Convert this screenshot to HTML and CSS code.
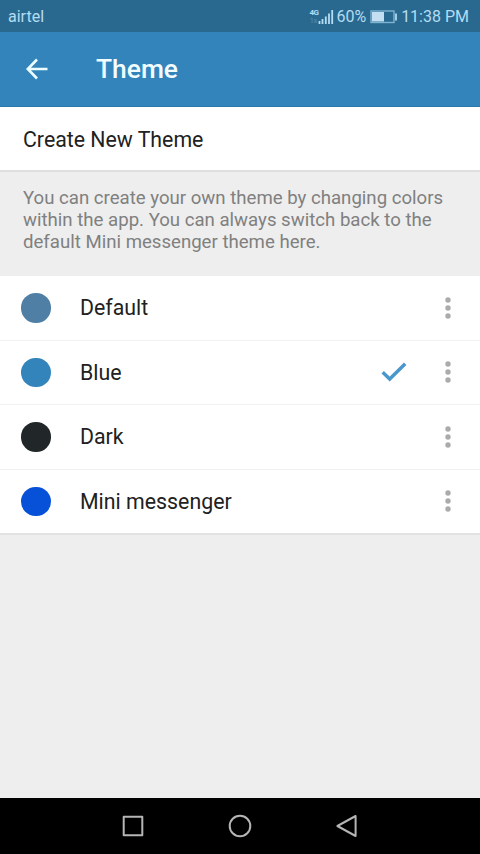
FILE: index.html
```html
<!DOCTYPE html>
<html lang="en">
<head>
<meta charset="utf-8">
<meta name="viewport" content="width=device-width, initial-scale=1">
<title>Theme</title>
<link rel="stylesheet" href="styles.css">
</head>
<body>
<div class="screen">
  <div class="status">
    <span class="carrier">airtel</span>
    <div class="indicators">
      <div class="network"><span>4G</span><span class="dim">1x</span></div>
      <svg class="signal" width="16" height="16" viewBox="0 0 16 16"><path d="M1.5 12v3M4.5 10v5M7.8 7.5v7.5M11 4.5V15M14.2 1v14"/></svg>
      <span class="percent">60%</span>
      <svg class="battery" width="28" height="14" viewBox="0 0 28 14"><rect class="case" x="1" y="1" width="23" height="11.5"/><rect class="charge" x="2" y="2" width="12" height="9.5"/><path class="tip" d="M26 3.5v7"/></svg>
      <span class="time">11:38 PM</span>
    </div>
  </div>
  <header class="bar">
    <svg class="back" width="24" height="24" viewBox="0 0 24 24"><path d="M22.5 12H2.5M12 2.5L2.8 12l9.2 9.5"/></svg>
    <h1>Theme</h1>
  </header>
  <main>
    <div class="create">Create New Theme</div>
    <p class="hint">You can create your own theme by changing colors<br>within the app. You can always switch back to the<br>default Mini messenger theme here.</p>
    <ul class="themes">
      <li><i class="dot default"></i><span>Default</span><svg class="more" width="8" height="24" viewBox="0 0 8 24"><circle cx="4" cy="4" r="2.7"/><circle cx="4" cy="12" r="2.7"/><circle cx="4" cy="20" r="2.7"/></svg></li>
      <li><i class="dot blue"></i><span>Blue</span><svg class="check" width="26" height="20" viewBox="0 0 26 20"><path d="M1.7 10.2l7 6.8L24.2 1.7"/></svg><svg class="more" width="8" height="24" viewBox="0 0 8 24"><circle cx="4" cy="4" r="2.7"/><circle cx="4" cy="12" r="2.7"/><circle cx="4" cy="20" r="2.7"/></svg></li>
      <li><i class="dot dark"></i><span>Dark</span><svg class="more" width="8" height="24" viewBox="0 0 8 24"><circle cx="4" cy="4" r="2.7"/><circle cx="4" cy="12" r="2.7"/><circle cx="4" cy="20" r="2.7"/></svg></li>
      <li><i class="dot mini"></i><span>Mini messenger</span><svg class="more" width="8" height="24" viewBox="0 0 8 24"><circle cx="4" cy="4" r="2.7"/><circle cx="4" cy="12" r="2.7"/><circle cx="4" cy="20" r="2.7"/></svg></li>
    </ul>
  </main>
  <nav class="navbar">
    <svg width="24" height="24" viewBox="0 0 24 24"><rect x="2.7" y="2.7" width="18.6" height="18.6"/></svg>
    <svg width="24" height="24" viewBox="0 0 24 24"><circle cx="12" cy="12" r="10.3"/></svg>
    <svg width="24" height="24" viewBox="0 0 24 24"><path d="M20.6 2v20L2.4 12z"/></svg>
  </nav>
</div>
</body>
</html>
```
FILE: styles.css
```css
* { box-sizing: border-box; }
body { margin: 0; font-family: Roboto, "Liberation Sans", sans-serif; }
svg { display: block; fill: none; flex: none; }
.screen { width: 480px; height: 854px; display: flex; flex-direction: column; background: #eeeeee; overflow: hidden; }
.status { height: 32px; flex: none; display: flex; align-items: center; justify-content: space-between; padding: 1px 11px 0 8px; background: #296990; color: #b4dcf2; font-size: 16px; }
.indicators { display: flex; align-items: center; }
.network { width: 9px; height: 16px; font-size: 8px; line-height: 8px; font-weight: 700; display: flex; flex-direction: column; letter-spacing: -0.5px; }
.dim { opacity: .3; font-weight: 400; }
.signal { stroke: #b4dcf2; stroke-width: 1.8; margin-right: 2px; }
.battery { margin: 0 3px 0 4px; }
.case { stroke: #7fb3d2; stroke-width: 1.4; }
.charge { fill: #c4dff2; }
.tip { stroke: #a2cde6; stroke-width: 2; }
.bar { height: 75px; flex: none; display: flex; align-items: center; padding-left: 25px; background: #3284ba; border-bottom: 1px solid #2e79aa; color: #f2fdff; }
.back { stroke: #ecfdff; stroke-width: 2.6; }
.bar h1 { margin: 0 0 0 47px; font-size: 26.4px; line-height: 32px; font-weight: 500; }
main { flex: 1; }
.create { height: 63px; padding-left: 23px; line-height: 65px; font-size: 21.3px; color: #212121; background: #fff; }
.hint { margin: 0; height: 106px; padding: 15px 23px 0; border-top: 2px solid #dfdfdf; font-size: 18.61px; line-height: 22px; color: #808080; white-space: nowrap; }
.themes { list-style: none; margin: 0; padding: 0; background: #fff; border-bottom: 2px solid #e2e2e2; }
.themes li { height: 64.5px; display: flex; align-items: center; padding: 0 28px 0 21px; font-size: 21.33px; color: #212121; border-bottom: 1px solid #f1f1f1; }
.themes li:last-child { border-bottom: 0; height: 63.5px; }
.themes span { flex: 1; }
.dot { width: 29.5px; height: 29.5px; border-radius: 50%; margin-right: 29.5px; flex: none; }
.default { background: #4f7fa5; }
.blue { background: #3284ba; }
.dark { background: #212628; }
.mini { background: #0750d8; }
.more { fill: #ababab; }
.check { stroke: #4a97ce; stroke-width: 3.4; margin-right: 37px; }
.navbar { height: 56px; flex: none; display: flex; align-items: center; justify-content: center; gap: 83px; background: #000; }
.navbar svg { stroke: #b5b5b5; stroke-width: 2; stroke-linejoin: round; }
```
